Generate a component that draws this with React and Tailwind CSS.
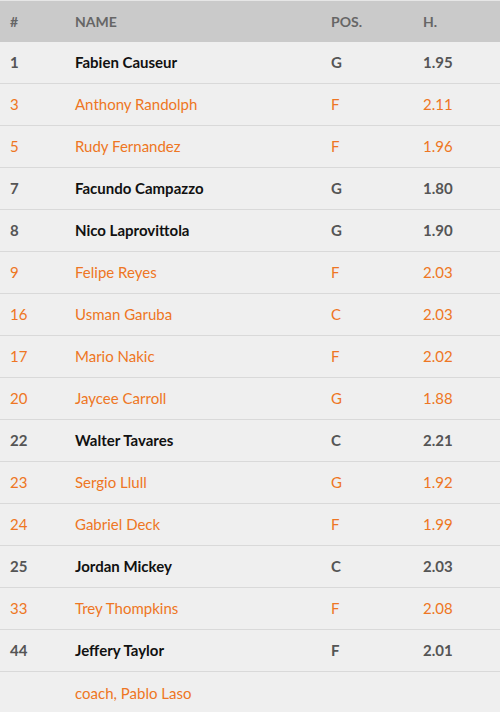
import React from "react";

const players = [
  ["1", "Fabien Causeur", "G", "1.95", true],
  ["3", "Anthony Randolph", "F", "2.11", false],
  ["5", "Rudy Fernandez", "F", "1.96", false],
  ["7", "Facundo Campazzo", "G", "1.80", true],
  ["8", "Nico Laprovittola", "G", "1.90", true],
  ["9", "Felipe Reyes", "F", "2.03", false],
  ["16", "Usman Garuba", "C", "2.03", false],
  ["17", "Mario Nakic", "F", "2.02", false],
  ["20", "Jaycee Carroll", "G", "1.88", false],
  ["22", "Walter Tavares", "C", "2.21", true],
  ["23", "Sergio Llull", "G", "1.92", false],
  ["24", "Gabriel Deck", "F", "1.99", false],
  ["25", "Jordan Mickey", "C", "2.03", true],
  ["33", "Trey Thompkins", "F", "2.08", false],
  ["44", "Jeffery Taylor", "F", "2.01", true],
];

const cols = "grid grid-cols-[65px_256px_92px_1fr] pl-[10px] items-center";

function App() {
  return (
    <div className="w-[500px] min-h-[712px] bg-[#efefef] font-['Lato','Liberation_Sans',sans-serif] text-[15px]">
      {/* Header */}
      <div className={`${cols} h-[42px] bg-[#cacaca] border-t border-[#e6e6e6] text-[14px] text-[#666] font-bold`}>
        <span>#</span>
        <span>NAME</span>
        <span>POS.</span>
        <span>H.</span>
      </div>

      {players.map(([num, name, pos, h, starter]) => (
        <div
          key={num}
          className={`${cols} h-[42px] border-b border-[#d9d9d9] ${
            starter ? "font-bold text-[#555]" : "text-[#ee7623]"
          }`}
        >
          <span>{num}</span>
          <span className={starter ? "text-[#111]" : ""}>{name}</span>
          <span>{pos}</span>
          <span>{h}</span>
        </div>
      ))}

      {/* Coach */}
      <div className={`${cols} h-[42px] text-[#ee7623]`}>
        <span></span>
        <span>coach, Pablo Laso</span>
      </div>
    </div>
  );
}

export default App;
